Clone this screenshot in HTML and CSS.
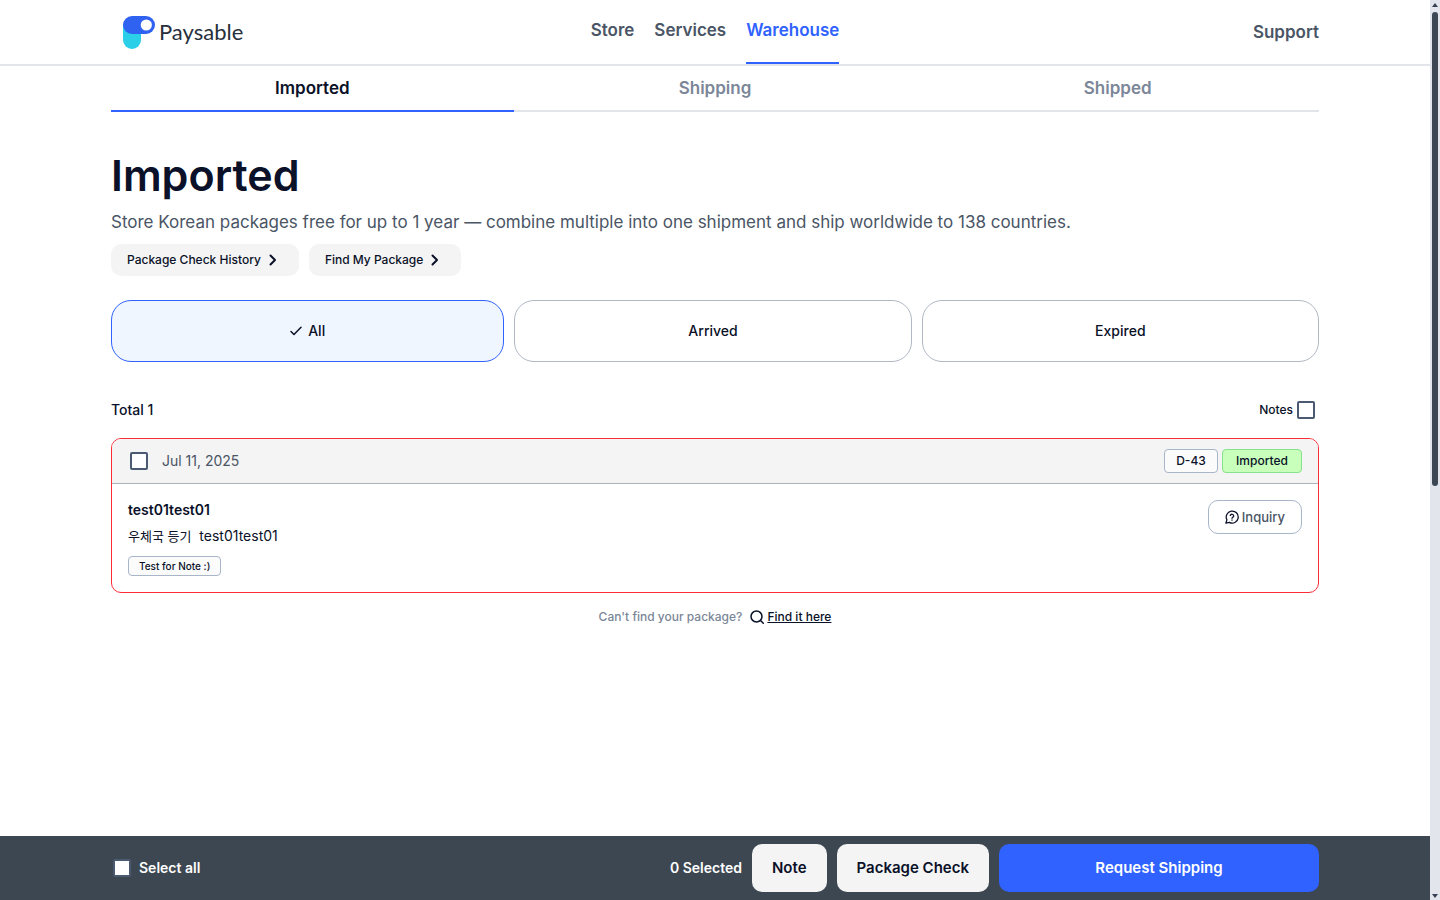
FILE: index.html
```html
<!DOCTYPE html>
<html lang="en">

<head>
    <meta charset="UTF-8">
    <meta name="viewport" content="width=device-width, initial-scale=1.0">
    <title>Paysable - Warehouse</title>
    <link rel="stylesheet" href="styles.css">
</head>

<body>
    <header class="header">
        <div class="container header-inner">
            <a href="#" class="logo">
                <svg width="33" height="33" viewBox="0 0 33 33" aria-hidden="true">
                    <path d="M0 9h18v15a9 9 0 0 1-18 0z" fill="#2bcfe8" />
                    <rect x="0" y="0" width="32" height="18" rx="9" fill="#2f62f0" />
                    <circle cx="23.300" cy="9" r="5.600" fill="#fff" />
                </svg>
                <span>Paysable</span>
            </a>
            <nav class="main-nav">
                <a href="#">Store</a>
                <a href="#">Services</a>
                <a href="#" class="active">Warehouse</a>
            </nav>
            <a href="#" class="support">Support</a>
        </div>
    </header>

    <main class="container">
        <nav class="tabs">
            <a href="#" class="active">Imported</a>
            <a href="#">Shipping</a>
            <a href="#">Shipped</a>
        </nav>

        <h1>Imported</h1>
        <p class="intro">Store Korean packages free for up to 1 year — combine multiple into one shipment and ship worldwide to 138 countries.</p>

        <div class="links">
            <button type="button" class="link-btn">Package Check History
                <svg width="8" height="12" viewBox="0 0 8 12" aria-hidden="true"><path d="M1.500 1.500L6 6l-4.500 4.500" /></svg>
            </button>
            <button type="button" class="link-btn">Find My Package
                <svg width="8" height="12" viewBox="0 0 8 12" aria-hidden="true"><path d="M1.500 1.500L6 6l-4.500 4.500" /></svg>
            </button>
        </div>

        <div class="filters">
            <button type="button" class="filter selected">
                <svg width="12" height="10" viewBox="0 0 12 10" aria-hidden="true"><path d="M1 5.500l3 3L11 1.300" /></svg>
                All
            </button>
            <button type="button" class="filter">Arrived</button>
            <button type="button" class="filter">Expired</button>
        </div>

        <div class="list-head">
            <span class="total">Total 1</span>
            <label class="notes-toggle" for="showNotes">Notes
                <input type="checkbox" id="showNotes">
            </label>
        </div>

        <section class="package">
            <div class="package-head">
                <input type="checkbox" id="package1">
                <label for="package1">Jul 11, 2025</label>
                <span class="badge days">D-43</span>
                <span class="badge status">Imported</span>
            </div>
            <div class="package-body">
                <div>
                    <p class="package-name">test01test01</p>
                    <p class="package-post"><span lang="ko">우체국 등기</span>&nbsp; test01test01</p>
                    <span class="note">Test for Note :)</span>
                </div>
                <button type="button" class="inquiry">
                    <svg width="14" height="14" viewBox="0 0 24 24" aria-hidden="true">
                        <path d="M3.300 17A10.300 10.300 0 1 1 7.500 21.200L1.600 22.400z" />
                        <path d="M9 9.300a3.100 3.100 0 0 1 6 .9c0 2-3 2.500-3 4M12 17v.5" />
                    </svg>
                    Inquiry
                </button>
            </div>
        </section>

        <p class="find">Can't find your package?
            <a href="#">
                <svg width="14" height="14" viewBox="0 0 14 14" aria-hidden="true"><circle cx="6.500" cy="6.500" r="5.500" /><path d="M10.500 10.500L13.300 13.300" /></svg>
                <span>Find it here</span>
            </a>
        </p>
    </main>

    <footer class="action-bar">
        <div class="container action-inner">
            <div class="select-all">
                <input type="checkbox" id="selectAll">
                <label for="selectAll">Select all</label>
            </div>
            <span class="count">0 Selected</span>
            <button type="button" class="btn">Note</button>
            <button type="button" class="btn">Package Check</button>
            <button type="button" class="btn primary">Request Shipping</button>
        </div>
    </footer>

    <div class="scrollbar" aria-hidden="true">
        <span class="arrow up"></span>
        <span class="track"><span class="thumb"></span></span>
        <span class="arrow down"></span>
    </div>
</body>

</html>
```
FILE: styles.css
```css
* {
    box-sizing: border-box;
}

body {
    margin: 0;
    padding-right: 10px;
    background-color: #fff;
    color: #0a1128;
    font-family: 'Inter', 'Noto Sans CJK KR', sans-serif;
    font-size: 14px;
    line-height: 20px;
}

h1,
p {
    margin: 0;
}

a {
    color: inherit;
    text-decoration: none;
}

button {
    color: inherit;
    font: inherit;
    font-weight: 500;
    cursor: pointer;
}

svg {
    fill: none;
    stroke: #0a1128;
    stroke-width: 1.5;
    stroke-linecap: round;
    stroke-linejoin: round;
}

input[type="checkbox"] {
    appearance: none;
    width: 18px;
    height: 18px;
    margin: 0;
    background-color: #fff;
    border: 2px solid #4a5a70;
    border-radius: 2px;
}

input[type="checkbox"]:checked {
    background-color: #2f62ff;
}

.container {
    max-width: 1208px;
    margin: 0 auto;
}

/* header */
.header {
    margin-right: -10px;
    padding-right: 10px;
    border-bottom: 2px solid #e2e6ea;
}

.header-inner {
    display: grid;
    grid-template-columns: 1fr auto 1fr;
    height: 64px;
}

.logo {
    display: flex;
    align-items: center;
    gap: 3px;
    padding-left: 12px;
    color: #27303c;
    font-family: 'Lato', sans-serif;
    font-size: 22px;
}

.logo svg {
    stroke: none;
}

.main-nav {
    display: flex;
    gap: 20px;
    color: #4a5565;
    font-size: 17px;
    font-weight: 600;
}

.main-nav a {
    padding-top: 20px;
    border-bottom: 2px solid transparent;
}

.main-nav .active {
    color: #2f62ff;
    border-color: #2f62ff;
}

.support {
    align-self: center;
    justify-self: end;
    color: #4a5565;
    font-size: 17px;
    font-weight: 600;
}

/* tabs */
.tabs {
    display: grid;
    grid-template-columns: repeat(3, 1fr);
    color: #7b8798;
    font-size: 17px;
    font-weight: 600;
    text-align: center;
}

.tabs a {
    padding: 12px 0;
    border-bottom: 2px solid #e2e6ea;
}

.tabs .active {
    color: #0a1128;
    border-color: #2f62ff;
}

h1 {
    margin-top: 38px;
    font-size: 43px;
    font-weight: 600;
    line-height: 50px;
}

.intro {
    margin-top: 10px;
    color: #4a5565;
    font-size: 17px;
    line-height: 24px;
}

.links {
    display: flex;
    gap: 10px;
    margin-top: 10px;
}

.link-btn {
    display: flex;
    align-items: center;
    gap: 8px;
    height: 32px;
    padding: 0 22px 0 16px;
    background-color: #f4f4f4;
    border: none;
    border-radius: 10px;
    font-size: 12px;
}

.link-btn svg {
    stroke-width: 2;
}

/* filters */
.filters {
    display: grid;
    grid-template-columns: 0.99fr 1fr 1fr;
    gap: 10px;
    margin-top: 24px;
}

.filter {
    display: flex;
    align-items: center;
    justify-content: center;
    gap: 6px;
    height: 62px;
    background-color: #fff;
    border: 1px solid #b0b8c4;
    border-radius: 20px;
}

.filter.selected {
    background-color: #eff6ff;
    border-color: #2f62ff;
}

.list-head {
    display: flex;
    justify-content: space-between;
    align-items: center;
    margin: 38px 0 18px;
    padding-right: 4px;
    font-weight: 500;
}

.notes-toggle {
    display: flex;
    align-items: center;
    gap: 4px;
    font-size: 12px;
}

/* package card */
.package {
    border: 1px solid #fb2c36;
    border-radius: 10px;
    overflow: hidden;
}

.package-head {
    display: flex;
    align-items: center;
    height: 45px;
    padding: 0 16px 0 18px;
    background-color: #f4f4f4;
    border-bottom: 1px solid #a9b2bd;
}

.package-head label {
    margin-left: 14px;
    margin-right: auto;
    color: #4a5565;
}

.badge {
    height: 24px;
    padding: 0 11px;
    border: 1px solid #a9b5c8;
    border-radius: 4px;
    font-size: 12px;
    font-weight: 500;
    line-height: 22px;
    text-align: center;
}

.days {
    min-width: 54px;
    background-color: #fbfbfc;
}

.status {
    min-width: 80px;
    margin-left: 4px;
    background-color: #c8ffba;
    border-color: #86e28c;
}

.package-body {
    display: flex;
    justify-content: space-between;
    align-items: flex-start;
    padding: 16px;
}

.package-name {
    font-weight: 600;
}

.package-post {
    margin: 6px 0 10px;
}

.package-post span {
    font-size: 13px;
}

.note {
    display: block;
    width: fit-content;
    padding: 0 10px;
    background-color: #fbfbfc;
    border: 1px solid #a9b5c8;
    border-radius: 4px;
    font-size: 10px;
    font-weight: 500;
    line-height: 18px;
}

.inquiry {
    display: flex;
    align-items: center;
    gap: 3px;
    height: 34px;
    padding: 0 16px;
    background-color: #fff;
    border: 1px solid #a9b5c8;
    border-radius: 10px;
    color: #4a5565;
    font-size: 13px;
}

.inquiry svg {
    stroke-width: 2.2;
}

.find {
    display: flex;
    justify-content: center;
    gap: 8px;
    margin-top: 14px;
    color: #7b8798;
    font-size: 12px;
    font-weight: 500;
}

.find a {
    display: flex;
    align-items: center;
    gap: 3px;
    color: #0a1128;
}

.find span {
    text-decoration: underline;
}

/* bottom bar */
.action-bar {
    position: fixed;
    left: 0;
    right: 0;
    bottom: 0;
    padding: 8px 10px 8px 0;
    background-color: #3d4752;
    color: #fff;
    font-weight: 600;
}

.action-inner {
    display: flex;
    align-items: center;
    gap: 10px;
}

.select-all {
    display: flex;
    align-items: center;
    gap: 8px;
    margin-right: auto;
    padding-left: 2px;
}

.btn {
    height: 48px;
    padding: 0 20px;
    background-color: #f4f4f4;
    border: none;
    border-radius: 10px;
    color: #0a1128;
    font-size: 15px;
    font-weight: 600;
}

.btn.primary {
    width: 320px;
    background-color: #2f62ff;
    color: #fff;
}

/* scrollbar */
.scrollbar {
    position: fixed;
    top: 0;
    right: 0;
    bottom: 0;
    display: flex;
    flex-direction: column;
    align-items: center;
    width: 10px;
    padding: 3px 0 2px;
    background-color: #e2e5ec;
}

.arrow {
    border: 3px solid transparent;
}

.up {
    border-top: none;
    border-bottom: 4px solid #364153;
}

.down {
    border-bottom: none;
    border-top: 4px solid #364153;
}

.track {
    flex: 1;
    width: 6px;
    margin: 5px 0;
}

.thumb {
    display: block;
    height: 54%;
    background-color: #3d4754;
    border-radius: 3px;
}
```
